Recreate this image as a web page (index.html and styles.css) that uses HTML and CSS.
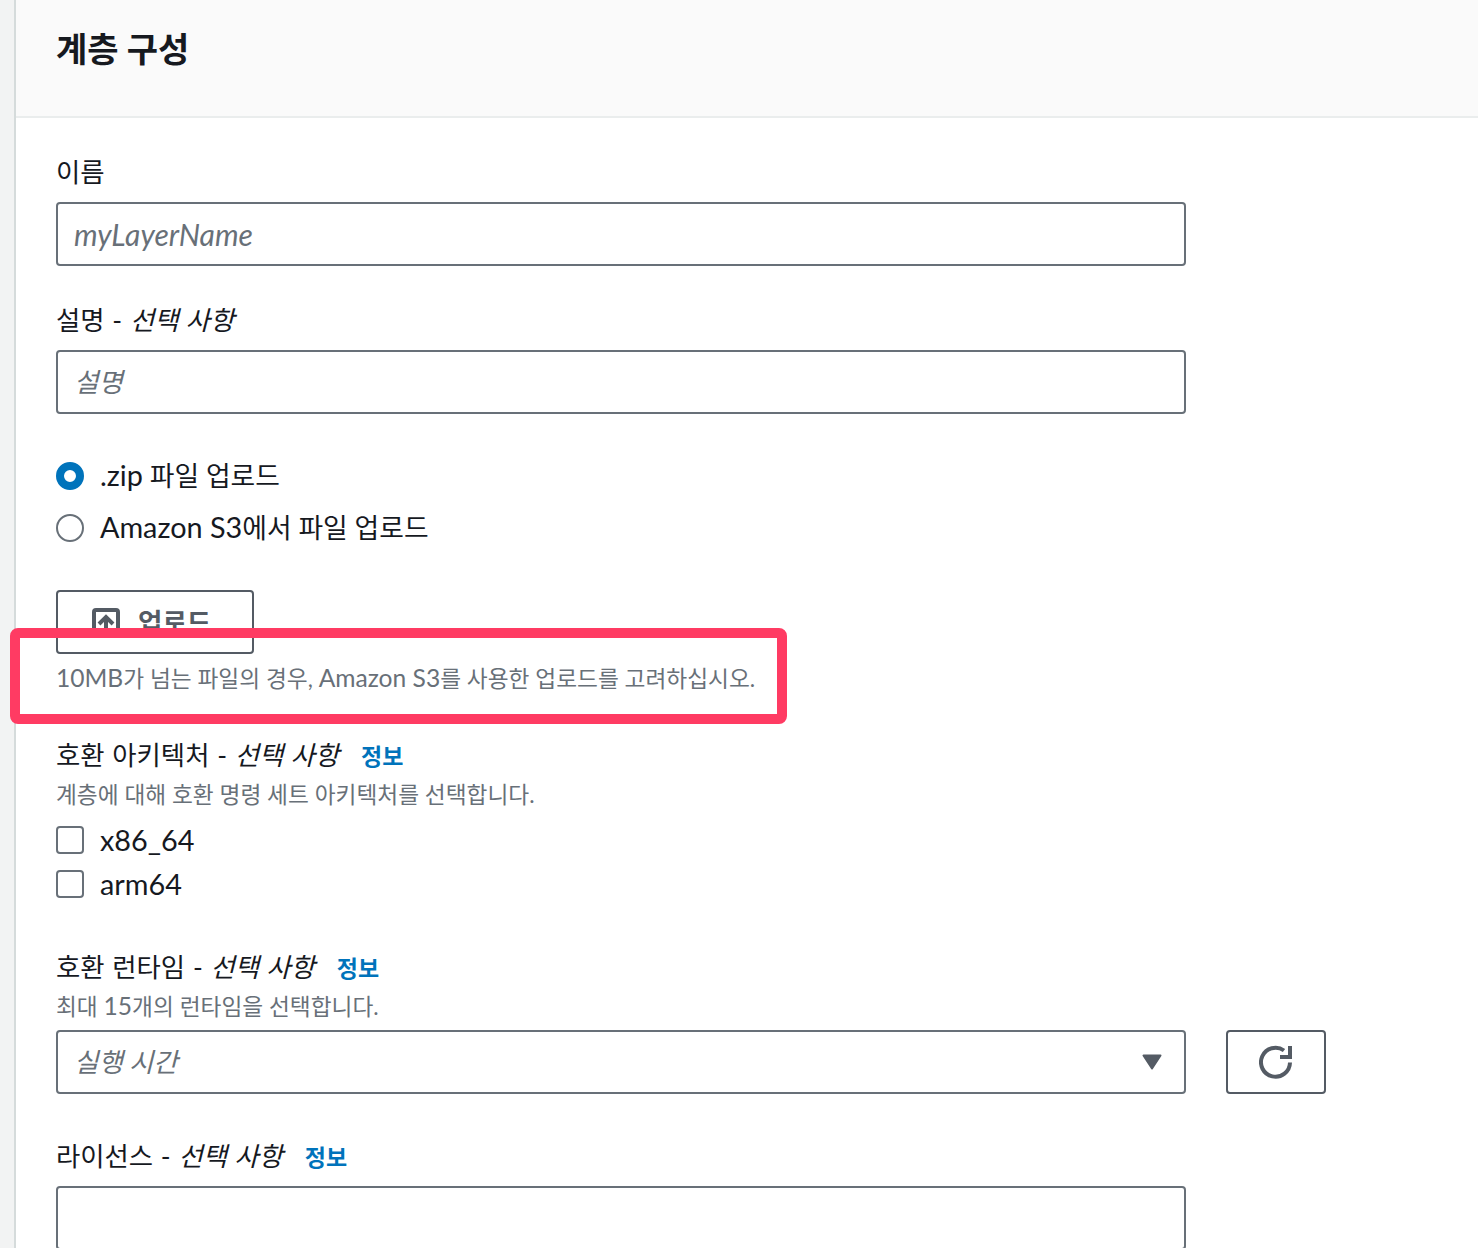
FILE: index.html
```html
<html>
<head>
    <title>계층 구성</title>
    <meta name="viewport" content="width=device-width, initial-scale=1.0">
    <link rel="stylesheet" href="styles.css">
</head>
<body>
    <div class="panel">
        <div class="panel-header">
            <h2>계층 구성</h2>
        </div>

        <div class="panel-body">
            <div class="field field-name">
                <label>이름</label>
                <div class="input-box placeholder"><span class="en">myLayerName</span></div>
            </div>

            <div class="field field-desc">
                <label>설명 - <i>선택 사항</i></label>
                <div class="input-box placeholder">설명</div>
            </div>

            <div class="radio-group">
                <div class="option">
                    <span class="radio checked"></span>
                    <span class="radio-text"><span class="en">.zip</span> 파일 업로드</span>
                </div>
                <div class="option">
                    <span class="radio"></span>
                    <span class="radio-text"><span class="en">Amazon S3</span>에서 파일 업로드</span>
                </div>
            </div>

            <button class="upload-btn">
                <svg class="upload-icon" viewBox="0 0 28 28" width="28" height="28">
                    <path d="M8 26H4a2 2 0 0 1-2-2V4a2 2 0 0 1 2-2h20a2 2 0 0 1 2 2v20a2 2 0 0 1-2 2h-4" fill="none" stroke="#545b64" stroke-width="4"/>
                    <path d="M14 27V11M7 16l7-7 7 7" fill="none" stroke="#545b64" stroke-width="4"/>
                </svg>
                <span class="upload-text">업로드</span>
            </button>
            <p class="hint hint-upload"><span class="en">10MB</span>가 넘는 파일의 경우, <span class="en">Amazon S3</span>를 사용한 업로드를 고려하십시오.</p>

            <div class="field-arch">
                <label>호환 아키텍처 - <i>선택 사항</i><a class="info">정보</a></label>
                <p class="hint">계층에 대해 호환 명령 세트 아키텍처를 선택합니다.</p>
                <div class="check-group">
                    <div class="option">
                        <span class="checkbox"></span>
                        <span class="en">x86_64</span>
                    </div>
                    <div class="option">
                        <span class="checkbox"></span>
                        <span class="en">arm64</span>
                    </div>
                </div>
            </div>

            <div class="field-runtime">
                <label>호환 런타임 - <i>선택 사항</i><a class="info">정보</a></label>
                <p class="hint">최대 <span class="en">15</span>개의 런타임을 선택합니다.</p>
                <div class="select-row">
                    <div class="input-box select placeholder">
                        <span>실행 시간</span>
                        <svg viewBox="0 0 20 16" width="20" height="16">
                            <path d="M1.500 1.500h17L10 14.500z" fill="#545b64" stroke="#545b64" stroke-width="2" stroke-linejoin="round"/>
                        </svg>
                    </div>
                    <button class="refresh-btn">
                        <svg viewBox="0 0 34 34" width="34" height="34">
                            <path d="M31 17.500A14.500 14.500 0 1 1 25 5.500" fill="none" stroke="#545b64" stroke-width="4"/>
                            <path d="M31 1v11H21" fill="none" stroke="#545b64" stroke-width="4"/>
                        </svg>
                    </button>
                </div>
            </div>

            <div class="field-license">
                <label>라이선스 - <i>선택 사항</i><a class="info">정보</a></label>
                <div class="input-box"></div>
            </div>
        </div>

        <div class="highlight"></div>
    </div>
</body>
</html>
```

FILE: styles.css
```css
html, body {
    height: 1248px;
    overflow: hidden;
}
body {
    margin: 0;
    padding: 0;
    background-color: #f2f3f3;
    color: #16191f;
    font-family: Lato, "Noto Sans CJK KR", sans-serif;
    font-size: 26.500px;
}
.en {
    line-height: 1;
}
.panel {
    position: relative;
    margin-left: 14px;
    height: 1248px;
    background: white;
    border-left: 2px solid #d5dbdb;
}
.panel-header {
    height: 116px;
    background-color: #fafafa;
    border-bottom: 2px solid #eaeded;
}
.panel-header h2 {
    margin: 0;
    padding: 24px 0 0 40px;
    font-size: 34px;
    line-height: 50px;
    font-weight: 700;
}
.panel-body {
    padding: 0 0 0 40px;
}
label {
    display: block;
    font-size: 26.400px;
    line-height: 40px;
    word-spacing: 1px;
}
label i {
    font-style: italic;
}
.field-name {
    padding-top: 34px;
}
.field-name label {
    margin-bottom: 10px;
}
.field-desc {
    padding-top: 34px;
}
.field-desc label {
    margin-bottom: 10px;
}
.input-box {
    box-sizing: border-box;
    width: 1130px;
    height: 64px;
    padding: 0 16px;
    border: 2px solid #687078;
    border-radius: 4px;
    background: white;
    line-height: 60px;
}
.placeholder {
    color: #687078;
    font-style: italic;
}
.placeholder .en {
    font-size: 30px;
    line-height: 60px;
}
.radio-group {
    display: flex;
    flex-direction: column;
    gap: 12px;
    margin-top: 42px;
}
.option {
    display: flex;
    align-items: center;
    gap: 16px;
    height: 40px;
    font-size: 26.800px;
}
.option .en {
    font-size: 28.800px;
}
.radio-text {
    margin-bottom: 4px;
}
.radio {
    box-sizing: border-box;
    width: 28px;
    height: 28px;
    border: 2px solid #687078;
    border-radius: 50%;
}
.radio.checked {
    border: 8px solid #0073bb;
}
.upload-btn {
    display: flex;
    align-items: center;
    gap: 18px;
    box-sizing: border-box;
    width: 198px;
    height: 64px;
    margin-top: 42px;
    padding: 0 0 0 34px;
    border: 2px solid #545b64;
    border-radius: 4px;
    background: white;
    color: #545b64;
    font-family: inherit;
    font-size: 26.500px;
    font-weight: 700;
}
.upload-text {
    margin-bottom: 4px;
}
.hint {
    margin: 0 0 -1px;
    padding-top: 1px;
    color: #687078;
    font-size: 22.700px;
    line-height: 36px;
}
.hint .en {
    font-size: 24.600px;
}
.hint-upload {
    margin-top: 6px;
}
.field-arch {
    margin-top: 39px;
}
.field-arch label,
.field-runtime label,
.field-license label {
    display: flex;
    align-items: baseline;
    white-space: pre;
}
.info {
    margin-left: 22px;
    color: #0073bb;
    font-size: 23px;
    font-weight: 700;
}
.check-group {
    display: flex;
    flex-direction: column;
    gap: 4px;
    margin-top: 8px;
}
.checkbox {
    box-sizing: border-box;
    width: 28px;
    height: 28px;
    border: 2px solid #687078;
    border-radius: 4px;
}
.field-runtime {
    margin-top: 43px;
}
.select-row {
    display: flex;
    gap: 40px;
    margin-top: 6px;
}
.select {
    display: flex;
    align-items: center;
    justify-content: space-between;
    padding-right: 22px;
}
.refresh-btn {
    display: flex;
    align-items: center;
    justify-content: center;
    box-sizing: border-box;
    width: 100px;
    height: 64px;
    padding: 0;
    border: 2px solid #545b64;
    border-radius: 4px;
    background: white;
}
.field-license {
    margin-top: 42px;
}
.field-license label {
    margin-bottom: 9px;
}
.highlight {
    position: absolute;
    left: -6px;
    top: 628px;
    box-sizing: border-box;
    width: 777px;
    height: 96px;
    border: 10px solid #ff3b63;
    border-radius: 8px;
}
```
